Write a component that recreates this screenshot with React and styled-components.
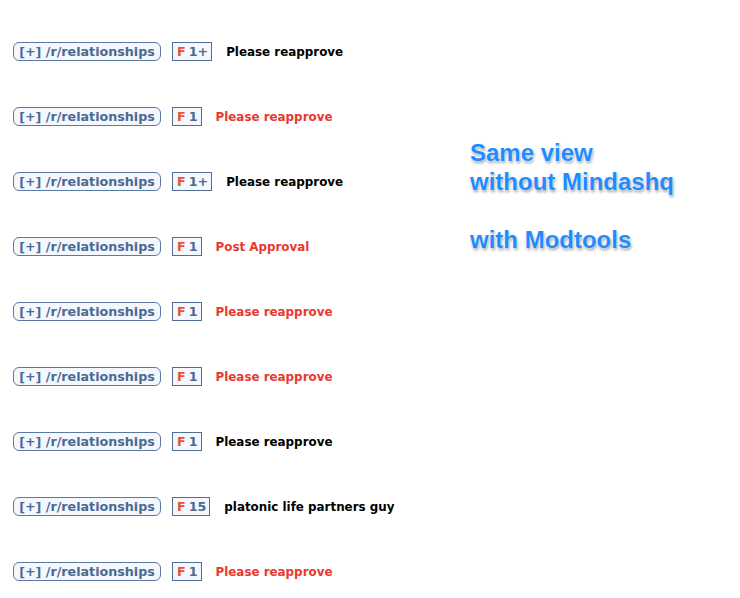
import React from 'react';
import styled, { createGlobalStyle } from 'styled-components';

const GlobalStyle = createGlobalStyle`
  body {
    margin: 0;
    background: #fff;
    font-family: Verdana, "DejaVu Sans", sans-serif;
  }
`;

const Page = styled.div`
  width: 740px;
  height: 598px;
  display: flex;
  overflow: hidden;
`;

const List = styled.div`
  padding: 19px 0 0 13px;
  width: 457px;
  flex-shrink: 0;
  display: flex;
  flex-direction: column;
`;

const Row = styled.div`
  height: 65px;
  flex-shrink: 0;
  display: flex;
  align-items: center;
`;

const Sub = styled.span`
  box-sizing: border-box;
  height: 19px;
  width: 148px;
  display: inline-flex;
  align-items: center;
  justify-content: center;
  border: 1px solid #5a7aa3;
  border-radius: 6px;
  background: #f4f7fb;
  color: #4a6a93;
  font-size: 12.7px;
  font-weight: bold;
  white-space: nowrap;
`;

const Flair = styled.span`
  box-sizing: border-box;
  height: 19px;
  margin-left: 11px;
  padding: 0 3px 0 4px;
  display: inline-flex;
  align-items: center;
  border: 1px solid #4f6f97;
  background: #f4f7fb;
  color: #4a6a93;
  font-size: 12.7px;
  font-weight: bold;
  white-space: nowrap;
`;

const FLetter = styled.span`
  color: #e9502f;
  margin-right: 3px;
`;

const Title = styled.span`
  margin-left: 14px;
  font-size: 11.9px;
  font-weight: bold;
  color: ${(props) => (props.red ? '#e8382f' : '#000')};
  white-space: nowrap;
`;

const Note = styled.div`
  padding-top: 138px;
  font-family: "Liberation Sans", Arial, sans-serif;
  font-weight: bold;
  font-size: 24px;
  line-height: 29px;
  color: #1e8cff;
  text-shadow: 0 0 1px #fff, 0 0 2px #fff, 1px 2px 3px rgba(0, 0, 0, 0.4);
`;

const rows = [
  { n: '1+', title: 'Please reapprove', red: false },
  { n: '1', title: 'Please reapprove', red: true },
  { n: '1+', title: 'Please reapprove', red: false },
  { n: '1', title: 'Post Approval', red: true },
  { n: '1', title: 'Please reapprove', red: true },
  { n: '1', title: 'Please reapprove', red: true },
  { n: '1', title: 'Please reapprove', red: false },
  { n: '15', title: 'platonic life partners guy', red: false },
  { n: '1', title: 'Please reapprove', red: true },
];

const App = () => {
  return (
    <>
      <GlobalStyle />
      <Page>
        <List>
          {rows.map((r, i) => (
            <Row key={i}>
              <Sub>[+] /r/relationships</Sub>
              <Flair>
                <FLetter>F</FLetter>
                {r.n}
              </Flair>
              <Title red={r.red}>{r.title}</Title>
            </Row>
          ))}
        </List>
        <Note>
          Same view
          <br />
          without Mindashq
          <br />
          <br />
          with Modtools
        </Note>
      </Page>
    </>
  );
};

export default App;
